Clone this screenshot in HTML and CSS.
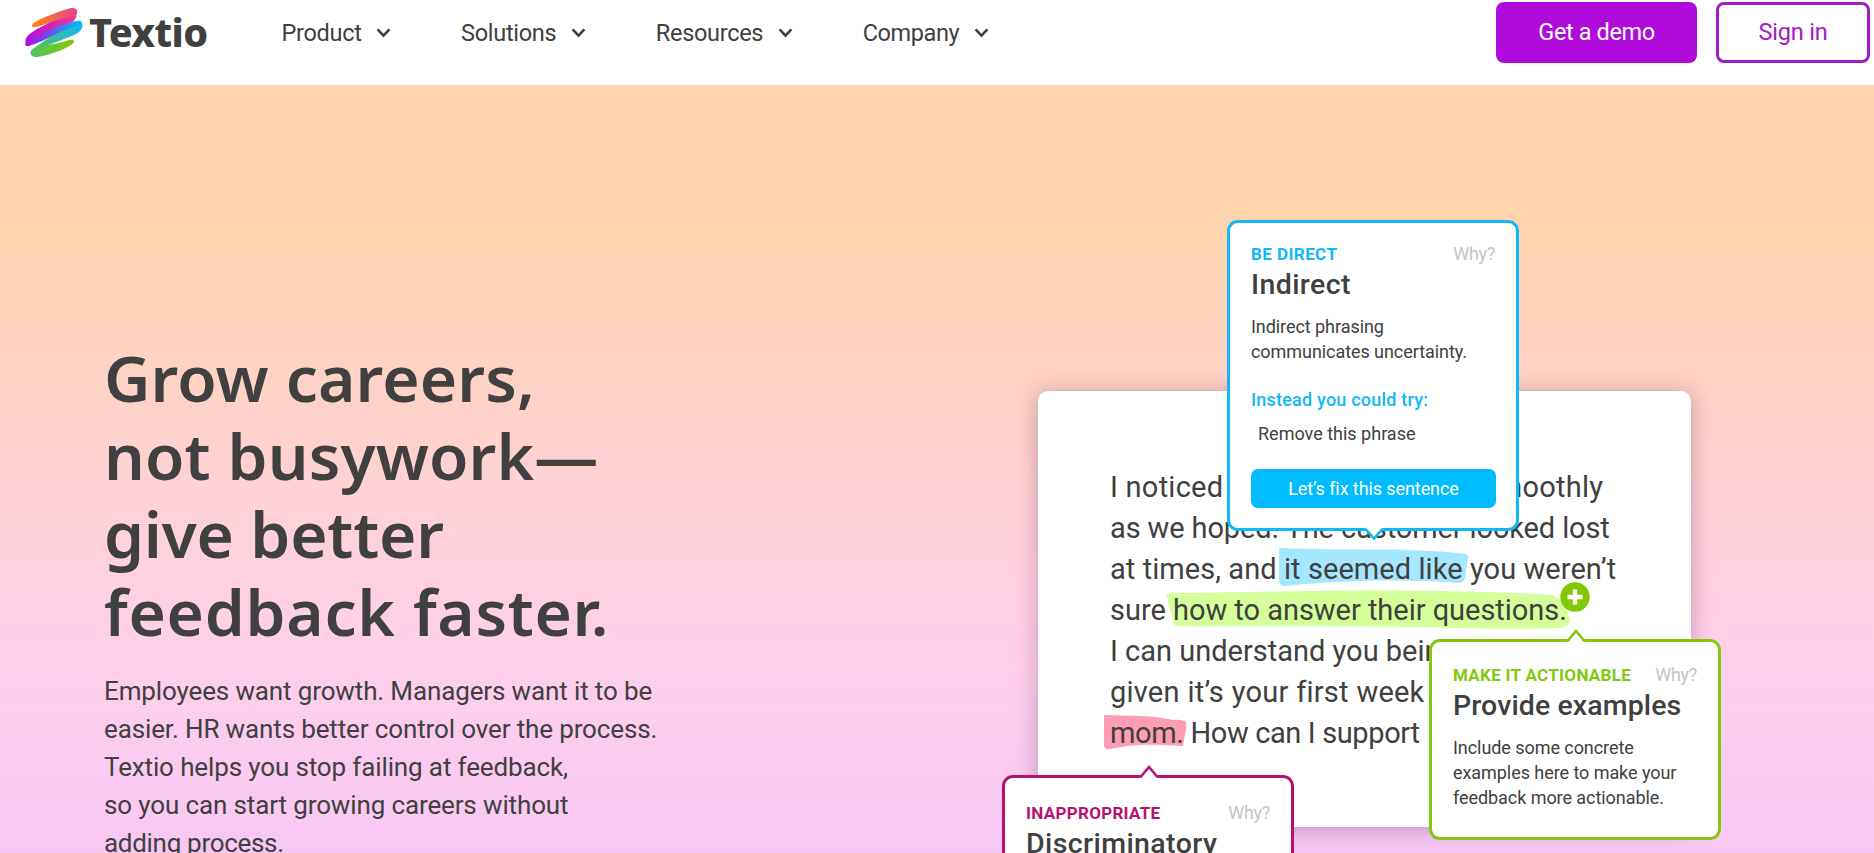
FILE: index.html
```html
<!DOCTYPE html>
<html lang="en">
<head>
<meta charset="utf-8">
<title>Textio</title>
<link rel="stylesheet" href="styles.css">
</head>
<body>
<header class="header">
  <a class="logo">
    <svg class="logo-mark" viewBox="0 0 60 52" width="60" height="52">
      <defs>
        <linearGradient id="g1" x1="0" x2="1"><stop offset="0" stop-color="#ff8a00"/><stop offset="1" stop-color="#e8409a"/></linearGradient>
        <linearGradient id="g2" x1="0" x2="1"><stop offset="0" stop-color="#b00be0"/><stop offset="1" stop-color="#ee3f8c"/></linearGradient>
        <linearGradient id="g3" x1="0" x2="1"><stop offset="0" stop-color="#b00be0"/><stop offset="1" stop-color="#00bcff"/></linearGradient>
        <linearGradient id="g4" x1="0" x2="1"><stop offset="0" stop-color="#55c655"/><stop offset="1" stop-color="#08b9f5"/></linearGradient>
        <linearGradient id="g5" x1="0" x2="1"><stop offset="0" stop-color="#4fc46a"/><stop offset="1" stop-color="#86c900"/></linearGradient>
      </defs>
      <path fill="url(#g2)" d="M2 37C-1 30 8 25 15 21L34 11L52 7C54 12 47 17 41 20C28 27 14 33 2 37Z"/>
      <path fill="url(#g1)" d="M11 20C6 21 8 17 11 15C22 9 36 4 47 1C54 0 55 6 51 9C40 11 29 14 22 17C18 18 14 20 11 20Z"/>
      <path fill="url(#g5)" d="M13 50C6 51 4 44 10 41C20 37 32 38 45 33C51 32 52 35 47 38C37 44 25 48 13 50Z"/>
      <path fill="url(#g4)" d="M9 42C22 32 38 22 58 16C60 21 55 26 50 28C36 34 22 39 9 42Z"/>
      <path fill="url(#g3)" d="M5 39C1 40 0 37 3 35C18 27 37 17 52 14C57 13 59 15 57 18C38 22 22 34 5 39Z"/>
    </svg>
    <span class="logo-text">Textio</span>
  </a>
  <nav class="nav">
    <a class="nav-item"><span>Product</span><svg class="chev" viewBox="0 0 14 10"><path d="M1.5 2L7 8L12.5 2"/></svg></a>
    <a class="nav-item"><span>Solutions</span><svg class="chev" viewBox="0 0 14 10"><path d="M1.5 2L7 8L12.5 2"/></svg></a>
    <a class="nav-item"><span>Resources</span><svg class="chev" viewBox="0 0 14 10"><path d="M1.5 2L7 8L12.5 2"/></svg></a>
    <a class="nav-item"><span>Company</span><svg class="chev" viewBox="0 0 14 10"><path d="M1.5 2L7 8L12.5 2"/></svg></a>
  </nav>
  <div class="actions">
    <a class="btn btn-demo">Get a demo</a>
    <a class="btn btn-sign">Sign in</a>
  </div>
</header>
<main class="hero">
  <section class="copy">
    <h1 class="title"><span>Grow careers,</span><span>not busywork—</span><span>give better</span><span>feedback faster.</span></h1>
    <p class="lead"><span>Employees want growth. Managers want it to be</span><span>easier. HR wants better control over the process.</span><span>Textio helps you stop failing at feedback,</span><span>so you can start growing careers without</span><span>adding process.</span></p>
  </section>
  <section class="scene">
    <div class="doc">
      <svg class="marks" viewBox="0 0 653 436" width="653" height="436">
        <path fill="#a5e7ff" d="M241 158Q241 157 243 157C300 160 370 156 428 163Q431 164 430 167L427 187Q426 192 420 192C370 188 310 189 246 195Q242 195 241 190Z"/>
        <path fill="#d5ff9a" d="M129 206C128 203 131 202 136 202C250 201 370 196 516 204L526 212L532 228Q532 236 522 237C440 240 380 233 137 235Q134 228 129 206Z"/>
        <path fill="#ff9db5" d="M66 324C90 325 115 324 135 329Q140 328 147 330Q149 332 148 338L145 355C120 354 100 352 73 358Q67 359 66 355Z"/>
      </svg>
      <div class="note">
        <p>I noticed the demo didn’t go smoothly</p>
        <p>as we hoped. The customer looked lost</p>
        <p>at times, and it seemed like you weren’t</p>
        <p>sure how to answer their questions.</p>
        <p>I can understand you being distracted</p>
        <p>given it’s your first week as a new</p>
        <p>mom. How can I support</p>
      </div>
      <svg class="plus" viewBox="0 0 30 30" width="30" height="30"><circle cx="15" cy="15" r="14.7" fill="#82c805"/><path d="M15 7.5V22.5M7.5 15H22.5" stroke="#fff" stroke-width="4.4"/></svg>
    </div>
    <article class="card blue">
      <div class="row"><b class="tag">BE DIRECT</b><span class="why">Why?</span></div>
      <h2 class="head">Indirect</h2>
      <p class="text">Indirect phrasing<br>communicates uncertainty.</p>
      <p class="try">Instead you could try:</p>
      <p class="remove">Remove this phrase</p>
      <a class="fix">Let’s fix this sentence</a>
      <svg class="tip down" viewBox="0 0 20 14"><path class="tip-fill" d="M0 0H20L18 1.5L10 11.5L2 1.5Z"/><path class="tip-line" d="M0 1.5H2L10 10.5L18 1.5H20"/></svg>
    </article>
    <article class="card green">
      <svg class="tip up" viewBox="0 0 20 14"><path class="tip-fill" d="M0 14H20L18 12.5L10 2.5L2 12.5Z"/><path class="tip-line" d="M0 12.5H2L10 3L18 12.5H20"/></svg>
      <div class="row"><b class="tag">MAKE IT ACTIONABLE</b><span class="why">Why?</span></div>
      <h2 class="head">Provide examples</h2>
      <p class="text">Include some concrete<br>examples here to make your<br>feedback more actionable.</p>
    </article>
    <article class="card pink">
      <svg class="tip up" viewBox="0 0 20 14"><path class="tip-fill" d="M0 14H20L18 12.5L10 2.5L2 12.5Z"/><path class="tip-line" d="M0 12.5H2L10 3L18 12.5H20"/></svg>
      <div class="row"><b class="tag">INAPPROPRIATE</b><span class="why">Why?</span></div>
      <h2 class="head">Discriminatory</h2>
    </article>
  </section>
</main>
</body>
</html>
```
FILE: styles.css
```css
* { box-sizing: border-box; margin: 0; padding: 0; }
body { width: 1874px; height: 853px; overflow: hidden; font-family: Roboto, "Liberation Sans", sans-serif; color: #404040; background: #fff; }

.header { display: flex; height: 85px; padding: 2px 4px 0 24px; }
.logo { display: flex; width: 257.5px; }
.logo-mark { margin-top: 5px; flex: none; }
.logo-text { height: 54px; margin: 3px 0 0 5px; font: 800 39.5px/54px "Noto Sans", sans-serif; letter-spacing: -.6px; white-space: nowrap; }
.nav { display: flex; flex: 1; height: 61px; font-size: 23.5px; line-height: 61px; letter-spacing: -.3px; }
.nav-item { display: flex; align-items: center; margin-right: 70px; }
.nav-item:nth-child(4) { letter-spacing: -.4px; }
.nav-item span { padding-top: 2px; }
.chev { width: 15px; height: 11px; margin-left: 14.5px; fill: none; stroke: #404040; stroke-width: 2.4; }
.actions { display: flex; gap: 19px; }
.btn { height: 61px; border-radius: 8px; font-size: 23.5px; line-height: 60px; letter-spacing: -.4px; text-align: center; }
.btn-demo { width: 201px; background: #b10bdb; color: #fff; }
.btn-sign { width: 154px; border: 3px solid #a31bc3; color: #a31bc3; line-height: 54px; letter-spacing: -.2px; }

.hero { display: flex; height: 768px; overflow: hidden; background: linear-gradient(#ffd3ac 0, #ffd3ac 130px, #ffd2d0 365px, #ffd0eb 575px, #f8c8f4 768px); }
.copy { width: 1002px; padding: 254px 0 0 104px; white-space: nowrap; }
.copy span { display: block; }
.title { font: 600 64px/78px "Noto Sans", sans-serif; }
.title span:nth-child(1), .title span:nth-child(2) { letter-spacing: .15px; }
.title span:nth-child(3) { letter-spacing: -.2px; }
.title span:nth-child(4) { letter-spacing: .7px; }
.lead { margin-top: 21px; font-size: 26px; line-height: 38px; letter-spacing: -.13px; }
.lead span:nth-child(5) { letter-spacing: -.3px; }

.scene { position: relative; flex: 1; }
.doc { position: absolute; left: 36px; top: 306px; width: 653px; height: 436px; padding: 76px 0 0 72px; border-radius: 10px; background: #fff; box-shadow: 0 2px 22px rgba(90, 40, 80, .35); }
.marks { position: absolute; left: 0; top: 0; }
.note { position: relative; font-size: 29px; line-height: 41px; white-space: nowrap; }
.note p:nth-child(1) { letter-spacing: .25px; }
.note p:nth-child(2) { letter-spacing: -.12px; }
.note p:nth-child(3) { letter-spacing: .07px; }
.note p:nth-child(4) { letter-spacing: -.03px; }
.note p:nth-child(6) { letter-spacing: .22px; word-spacing: .3px; }
.note p:nth-child(7) { letter-spacing: -.37px; }
.plus { position: absolute; left: 522px; top: 191px; }

.card { position: absolute; width: 292px; padding: 19px 21px 0; border: 3px solid var(--tone); border-radius: 11px; background: #fff; white-space: nowrap; }
.blue { --tone: #12b8f5; left: 225px; top: 135px; height: 311px; }
.green { --tone: #82c80f; left: 427px; top: 554px; height: 201px; padding-top: 21px; }
.pink { --tone: #b51270; left: 0; top: 690px; height: 200px; padding-top: 23px; }
.row { display: flex; justify-content: space-between; height: 24px; font-size: 17px; line-height: 24px; }
.tag { color: var(--tone); letter-spacing: .3px; }
.blue .tag { letter-spacing: .43px; }
.why { color: #c4c4c4; font-size: 18px; letter-spacing: -.3px; }
.head { margin-top: 2px; font-size: 28.5px; font-weight: 500; line-height: 34px; letter-spacing: .1px; }
.blue .head, .pink .head { letter-spacing: .4px; }
.text { margin-top: 12px; font-size: 18px; line-height: 25px; letter-spacing: -.06px; }
.try { margin-top: 23px; color: var(--tone); font-size: 18px; font-weight: 500; line-height: 25px; letter-spacing: .21px; }
.remove { margin: 9px 0 0 7px; font-size: 18px; line-height: 25px; }
.fix { display: block; width: 245px; height: 39px; margin-top: 22.5px; border-radius: 7px; background: #00bcff; color: #fff; font-size: 18px; line-height: 39px; letter-spacing: -.09px; text-align: center; }

.tip { position: absolute; width: 20px; height: 14px; fill: none; }
.tip-fill { fill: #fff; }
.tip-line { stroke: var(--tone); stroke-width: 2.6; }
.down { left: 134px; top: 305px; }
.up { left: 134px; top: -14px; }
```
